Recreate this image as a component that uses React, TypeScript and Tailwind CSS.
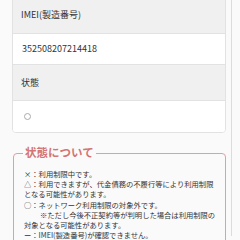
import React from "react";

export default function App() {
  const font = { fontFamily: '"Noto Sans CJK JP", "Noto Sans", sans-serif' };
  return (
    <div className="w-[240px] h-[240px] overflow-hidden bg-[#fafafa]" style={font}>
      <div className="w-[232px] h-[240px] border-r border-[#dcdcdc] pl-[12px] pr-[5px]">
        <div className="mt-[-4px] border border-[#e2e2e2] rounded-b-[4px] bg-white overflow-hidden">
          <div className="h-[37px] bg-[#f0f0f0] border-b border-[#e2e2e2] flex items-center pl-[8px] text-[9px] text-[#333]">
            IMEI(製造番号)
          </div>
          <div className="h-[31px] bg-white border-b border-[#e2e2e2] flex items-center pl-[9px] text-[9px] text-[#333]">
            352508207214418
          </div>
          <div className="h-[36px] bg-[#f0f0f0] border-b border-[#e2e2e2] flex items-center pl-[8px] text-[9px] text-[#333]">
            状態
          </div>
          <div className="h-[31px] bg-white flex items-center pl-[11px]">
            <span className="block w-[7px] h-[7px] rounded-full border border-[#aaa]"></span>
          </div>
        </div>
        <div className="relative mt-[20px] ml-[1px] border border-[#d9a3a3] rounded-[4px] pt-[15px] pl-[10px] pr-[4px] pb-[10px] text-[7.3px] leading-[10.2px] text-[#333]">
          <div className="absolute left-[9px] top-[-9px] bg-[#fafafa] px-[2px] text-[11.5px] leading-[14px] font-bold text-[#d47474]">
            状態について
          </div>
          <div>×：利用制限中です。</div>
          <div>△：利用できますが、代金債務の不履行等により利用制限</div>
          <div>となる可能性があります。</div>
          <div>○：ネットワーク利用制限の対象外です。</div>
          <div className="pl-[16px]">※ただし今後不正契約等が判明した場合は利用制限の</div>
          <div>対象となる可能性があります。</div>
          <div>ー：IMEI(製造番号)が確認できません。</div>
        </div>
      </div>
    </div>
  );
}
